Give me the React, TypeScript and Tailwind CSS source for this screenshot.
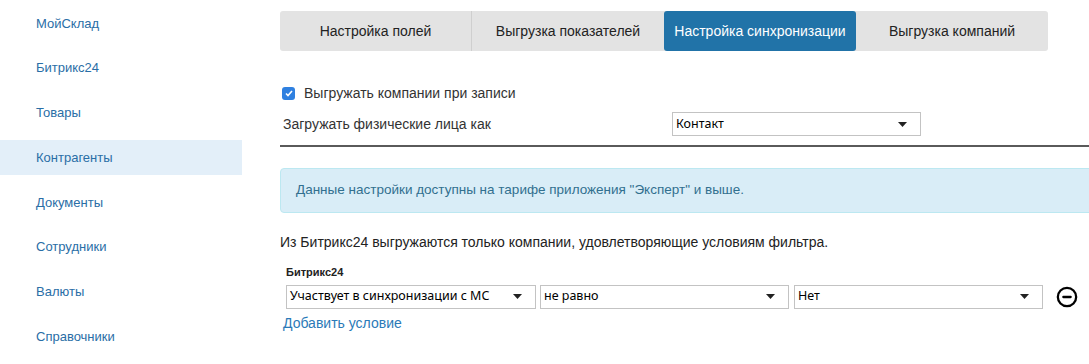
import { CircleMinus } from "lucide-react";

const menu = [
  "МойСклад",
  "Битрикс24",
  "Товары",
  "Контрагенты",
  "Документы",
  "Сотрудники",
  "Валюты",
  "Справочники",
];

const tabs = [
  { label: "Настройка полей", w: "w-[192px]" },
  { label: "Выгрузка показателей", w: "w-[192px]" },
  { label: "Настройка синхронизации", w: "w-[192px]", active: true },
  { label: "Выгрузка компаний", w: "w-[192px]" },
];

function Caret() {
  return (
    <svg width="9" height="5" viewBox="0 0 9 5" className="shrink-0">
      <path d="M0 0h9L4.5 5z" fill="#222" />
    </svg>
  );
}

function Select({ value, className }: { value: string; className: string }) {
  return (
    <div
      className={`flex h-[24px] items-center justify-between border border-[#c3c3c3] bg-white pl-[3px] pr-[13px] text-[12.5px] text-black ${className}`}
      style={{ fontFamily: '"Noto Sans", sans-serif' }}
    >
      <span>{value}</span>
      <Caret />
    </div>
  );
}

export default function App() {
  return (
    <div
      className="flex h-[364px] w-[1089px] overflow-hidden bg-white text-[#333]"
      style={{ fontFamily: '"Liberation Sans", Arial, sans-serif' }}
    >
      {/* Sidebar */}
      <div className="flex w-[242px] shrink-0 flex-col pt-[6px]">
        {menu.map((m) => (
          <div
            key={m}
            className={`mb-[10px] flex h-[35px] items-center pl-[36px] text-[13px] text-[#2a6ea6] ${
              m === "Контрагенты" ? "bg-[#e3eff9]" : ""
            }`}
          >
            {m}
          </div>
        ))}
      </div>

      {/* Content */}
      <div className="flex-1 pl-[38px] pt-[11px]">
        <div className="flex h-[40px] w-[768px] overflow-hidden rounded-[3px] bg-[#e3e3e3] text-[14px]">
          {tabs.map((t, i) => (
            <div
              key={t.label}
              className={`flex items-center justify-center ${t.w} ${
                t.active ? "rounded-[3px] bg-[#2173a8] text-white" : "text-[#222]"
              } ${i === 0 ? "border-r border-[#cfcfcf]" : ""}`}
            >
              {t.label}
            </div>
          ))}
        </div>

        <div className="mt-[32px] flex items-center pl-[2px] text-[14px]">
          <span className="flex h-[13px] w-[13px] items-center justify-center rounded-[3px] bg-[#2f80e0]">
            <svg width="8" height="7" viewBox="0 0 8 7">
              <path d="M1 3.5l2 2 4-4.5" stroke="#fff" strokeWidth="1.6" fill="none" />
            </svg>
          </span>
          <span className="ml-[9px]">Выгружать компании при записи</span>
        </div>

        <div className="mt-[8px] flex h-[24px] items-center pl-[3px] text-[14px]">
          <span className="w-[389px]">Загружать физические лица как</span>
          <Select value="Контакт" className="w-[249px]" />
        </div>

        <div className="mt-[9px] h-[2px] bg-[#5a5a5a]" />

        <div className="-mr-[10px] mt-[21px] flex h-[45px] items-center rounded-[4px] border border-[#bce8f1] bg-[#d9edf7] pl-[15px] text-[13.5px] text-[#31708f]">
          Данные настройки доступны на тарифе приложения "Эксперт" и выше.
        </div>

        <div className="mt-[19px] text-[14px] text-[#222]">
          Из Битрикс24 выгружаются только компании, удовлетворяющие условиям фильтра.
        </div>

        <div className="mt-[11px] pl-[6px] text-[11px] font-bold text-[#222]">Битрикс24</div>
        <div className="mt-[4px] flex items-center pl-[6px]">
          <Select value="Участвует в синхронизации с МС" className="w-[250px]" />
          <Select value="не равно" className="ml-[4px] w-[249px]" />
          <Select value="Нет" className="ml-[5px] w-[249px]" />
          <CircleMinus className="ml-[13px] h-[22px] w-[22px] text-black" strokeWidth={2.5} />
        </div>
        <div className="mt-[4px] pl-[3px] text-[14px] text-[#2a7ab8]">Добавить условие</div>
      </div>
    </div>
  );
}
